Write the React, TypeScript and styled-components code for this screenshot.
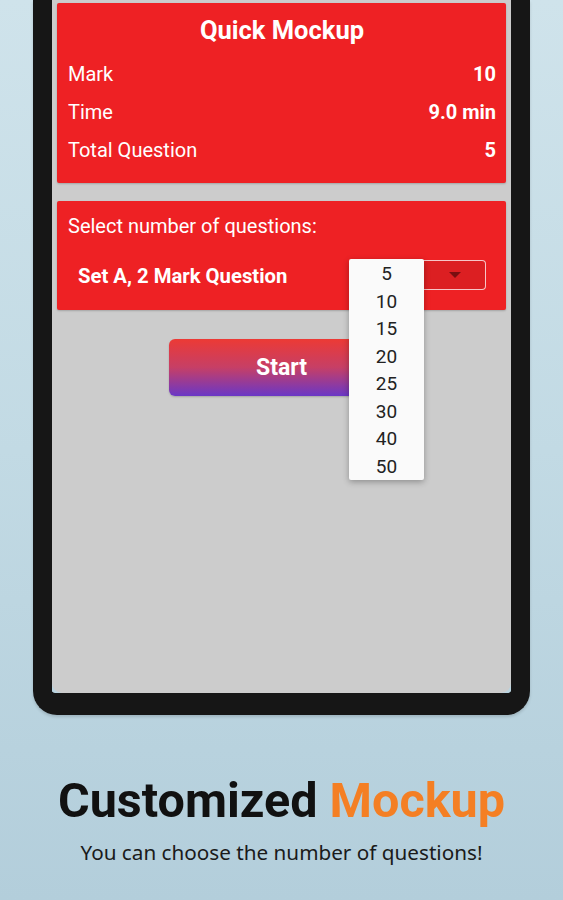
import styled, { createGlobalStyle } from 'styled-components';

const GlobalStyle = createGlobalStyle`
  html, body {
    margin: 0;
    padding: 0;
  }
  body {
    width: 563px;
    height: 900px;
    overflow: hidden;
    background: linear-gradient(180deg, #cfe3eb 0%, #c2dae4 50%, #b3cedb 100%);
    font-family: Roboto, "Liberation Sans", sans-serif;
  }
`;

const Page = styled.div`
  width: 563px;
  height: 900px;
  display: flex;
  flex-direction: column;
  align-items: center;
`;

const Frame = styled.div`
  width: 459px;
  border: 19px solid #161616;
  border-top: 0;
  border-bottom-width: 22px;
  border-radius: 0 0 24px 24px;
  box-shadow: 0 2px 3px rgba(0, 0, 0, 0.15);
`;

const Screen = styled.div`
  height: 693px;
  background: #cccccc;
  border-radius: 0 0 10px 10px;
  padding: 3px 5px 0;
  box-sizing: border-box;
  display: flex;
  flex-direction: column;
  align-items: stretch;
`;

const Card = styled.div`
  background: #ee2124;
  border-radius: 2px;
  color: #fff;
  box-shadow: 0 1px 2px rgba(0, 0, 0, 0.2);
`;

const InfoCard = styled(Card)`
  height: 180px;
  padding: 12px 10px 0 11px;
  box-sizing: border-box;
`;

const Title = styled.div`
  text-align: center;
  font-size: 25.5px;
  font-weight: 700;
  line-height: 30px;
  margin-bottom: 10px;
`;

const InfoRow = styled.div`
  display: flex;
  justify-content: space-between;
  align-items: center;
  height: 38px;
  font-size: 20px;
`;

const Value = styled.span`
  font-weight: 700;
`;

const SelectCard = styled(Card)`
  height: 109px;
  margin-top: 18px;
  padding: 13px 20px 0 11px;
  box-sizing: border-box;
`;

const Prompt = styled.div`
  font-size: 20px;
  line-height: 24px;
`;

const SelectRow = styled.div`
  display: flex;
  align-items: center;
  justify-content: space-between;
  margin-top: 22px;
  padding-left: 10px;
`;

const SetLabel = styled.span`
  font-size: 20.3px;
  font-weight: 700;
  padding-top: 2px;
`;

const Spinner = styled.div`
  position: relative;
  width: 137px;
  height: 30px;
  box-sizing: border-box;
  border: 1.5px solid rgba(255, 255, 255, 0.75);
  border-radius: 4px;
  background: #dc1f22;
  display: flex;
  align-items: center;
  justify-content: flex-end;
  padding-right: 24px;
`;

const Arrow = styled.span`
  width: 0;
  height: 0;
  border-left: 6px solid transparent;
  border-right: 6px solid transparent;
  border-top: 6px solid #7a0e10;
`;

const Popup = styled.ul`
  position: absolute;
  top: -2px;
  left: -1px;
  width: 75px;
  margin: 0;
  padding: 1px 0 0;
  list-style: none;
  background: #fafafa;
  border-radius: 2px;
  box-shadow: 0 2px 6px rgba(0, 0, 0, 0.3);
  z-index: 2;
`;

const Option = styled.li`
  height: 27.5px;
  line-height: 27.5px;
  text-align: center;
  font-size: 19px;
  color: #222;
`;

const StartButton = styled.button`
  align-self: center;
  margin-top: 29px;
  width: 225px;
  height: 57px;
  border: 0;
  border-radius: 6px;
  background: linear-gradient(180deg, #ec3a35 0%, #c63f66 50%, #6a37c6 100%);
  color: #fff;
  font-family: Roboto, "Liberation Sans", sans-serif;
  font-size: 23px;
  font-weight: 700;
  box-shadow: 0 1px 2px rgba(0, 0, 0, 0.2);
`;

const Caption = styled.div`
  margin-top: 57px;
  text-align: center;
`;

const Headline = styled.h1`
  margin: 0;
  font-family: Roboto, "Liberation Sans", sans-serif;
  font-size: 48.5px;
  font-weight: 700;
  line-height: 58px;
  color: #111;
`;

const Accent = styled.span`
  color: #f47f24;
`;

const Subline = styled.p`
  margin: 8px 0 0;
  font-family: "Noto Sans", "Open Sans", sans-serif;
  font-size: 20.7px;
  color: #1a1a1a;
`;

const info = [
  { label: 'Mark', value: '10' },
  { label: 'Time', value: '9.0 min' },
  { label: 'Total Question', value: '5' },
];

const options = ['5', '10', '15', '20', '25', '30', '40', '50'];

export default function App() {
  return (
    <>
      <GlobalStyle />
      <Page>
        <Frame>
          <Screen>
            <InfoCard>
              <Title>Quick Mockup</Title>
              {info.map(row => (
                <InfoRow key={row.label}>
                  <span>{row.label}</span>
                  <Value>{row.value}</Value>
                </InfoRow>
              ))}
            </InfoCard>
            <SelectCard>
              <Prompt>Select number of questions:</Prompt>
              <SelectRow>
                <SetLabel>Set A, 2 Mark Question</SetLabel>
                <Spinner>
                  <Arrow />
                  <Popup>
                    {options.map(o => (
                      <Option key={o}>{o}</Option>
                    ))}
                  </Popup>
                </Spinner>
              </SelectRow>
            </SelectCard>
            <StartButton>Start</StartButton>
          </Screen>
        </Frame>
        <Caption>
          <Headline>
            Customized <Accent>Mockup</Accent>
          </Headline>
          <Subline>You can choose the number of questions!</Subline>
        </Caption>
      </Page>
    </>
  );
}
